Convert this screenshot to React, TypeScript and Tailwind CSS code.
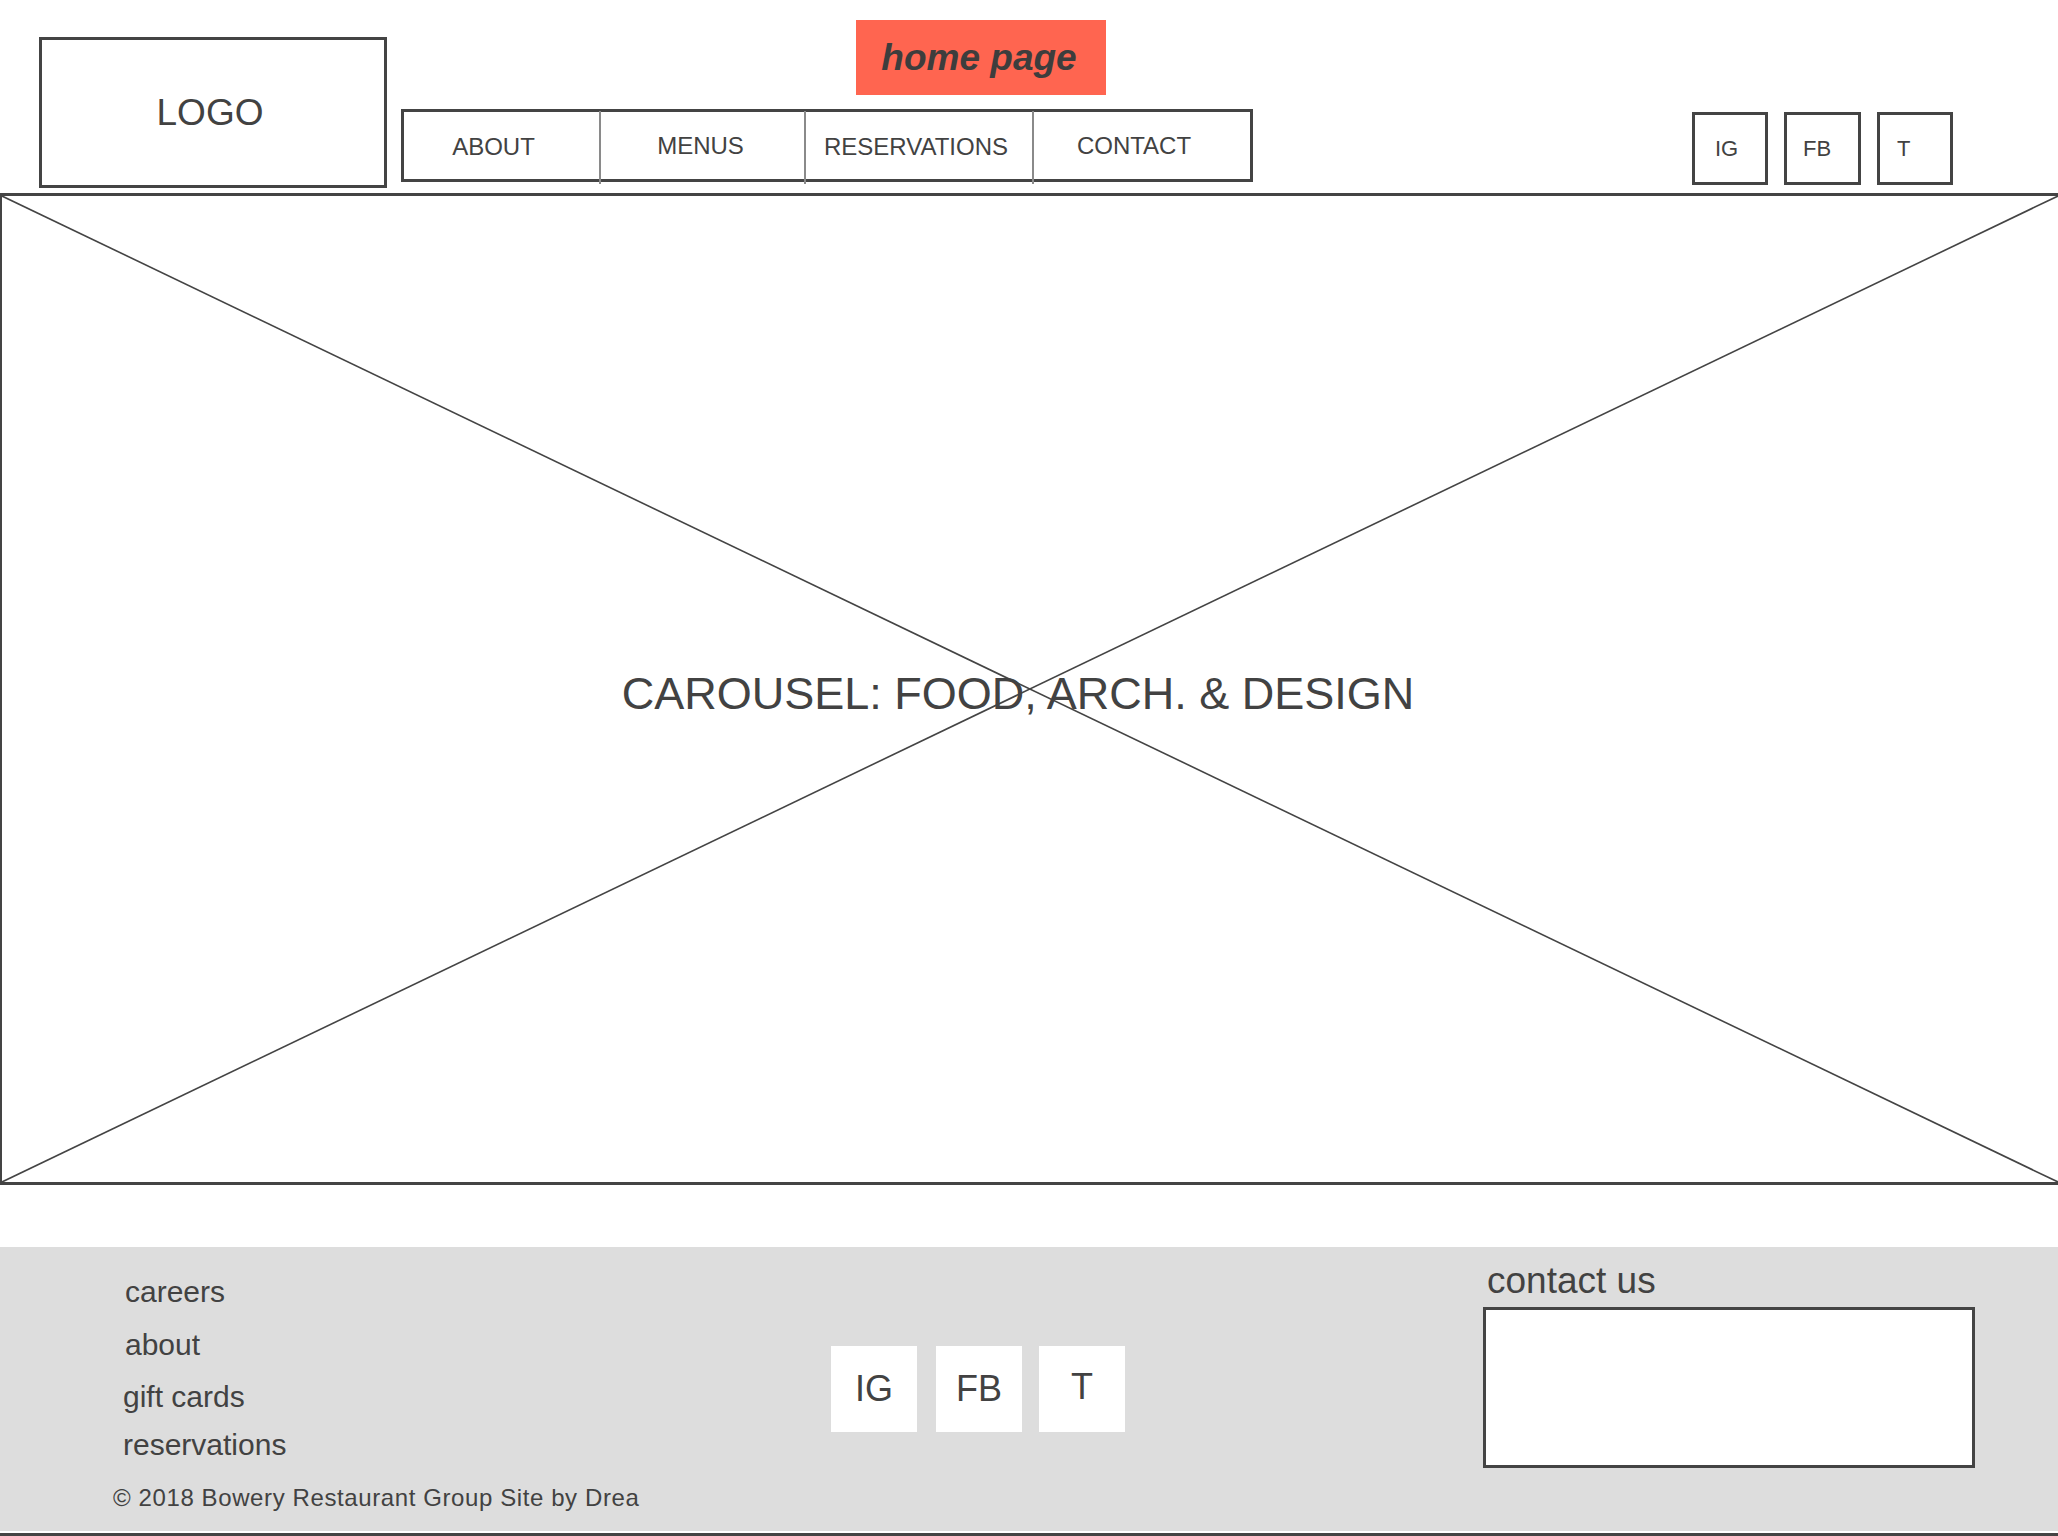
const ink = "text-[#424242]";

function NavCell({ label, w, pr, pt }: { label: string; w: string; pr: string; pt: string }) {
  return (
    <div className={`${w} ${pr} ${pt} flex items-center justify-center text-[24px] ${ink}`}>
      {label}
    </div>
  );
}

function Divider() {
  return <div className="w-[2px] h-[73px] -mt-[1px] bg-[#8a8a8a] self-start" />;
}

export default function App() {
  return (
    <div className="w-[2058px] h-[1536px] bg-white overflow-hidden font-['Liberation_Sans',Arial,sans-serif]">
      {/* header */}
      <div className="h-[193px] flex items-start">
        <div
          className={`ml-[39px] mt-[37px] w-[348px] h-[151px] border-[3px] border-[#444] flex items-center justify-center pr-[6px] text-[37px] ${ink}`}
        >
          LOGO
        </div>

        <div className="ml-[14px] flex flex-col">
          <div className="ml-[455px] mt-[20px] w-[250px] h-[75px] bg-[#ff6550] flex items-center justify-center pr-[4px] text-[37px] font-bold italic text-[#3d3d3d]">
            home page
          </div>
          <div className="mt-[14px] w-[852px] h-[73px] border-[3px] border-[#444] flex">
            <NavCell label="ABOUT" w="w-[195px]" pr="pr-[16px]" pt="pt-[3px]" />
            <Divider />
            <NavCell label="MENUS" w="w-[203px]" pr="pr-[4px]" pt="pt-[0px]" />
            <Divider />
            <NavCell label="RESERVATIONS" w="w-[226px]" pr="pr-[6px]" pt="pt-[3px]" />
            <Divider />
            <NavCell label="CONTACT" w="w-[216px]" pr="pr-[16px]" pt="pt-[0px]" />
          </div>
        </div>

        <div className="ml-auto mr-[105px] mt-[112px] flex gap-[16px]">
          <div className={`w-[76px] h-[73px] border-[3px] border-[#444] flex items-center pl-[20px] text-[22px] ${ink}`}>IG</div>
          <div className={`w-[77px] h-[73px] border-[3px] border-[#444] flex items-center pl-[16px] text-[22px] ${ink}`}>FB</div>
          <div className={`w-[76px] h-[73px] border-[3px] border-[#444] flex items-center pl-[17px] text-[22px] ${ink}`}>T</div>
        </div>
      </div>

      {/* carousel */}
      <div className="relative h-[992px] border-t-[3px] border-b-[3px] border-l-2 border-[#444] flex items-center justify-center">
        <svg className="absolute inset-0 w-full h-full" viewBox="0 0 100 100" preserveAspectRatio="none">
          <line x1="0" y1="0" x2="100" y2="100" stroke="#444" strokeWidth="1.6" vectorEffect="non-scaling-stroke" />
          <line x1="100" y1="0" x2="0" y2="100" stroke="#444" strokeWidth="1.6" vectorEffect="non-scaling-stroke" />
        </svg>
        <div className={`relative pr-[24px] pt-[10px] text-[45px] ${ink}`}>CAROUSEL: FOOD, ARCH. &amp; DESIGN</div>
      </div>

      {/* footer */}
      <div className="mt-[62px] h-[284px] bg-[#dddddd] flex items-start">
        <div className="w-[831px] pl-[113px] pt-[27px] flex flex-col">
          <div className={`ml-[12px] h-[36px] leading-[36px] text-[30px] ${ink}`}>careers</div>
          <div className={`ml-[12px] mt-[17px] h-[36px] leading-[36px] text-[30px] ${ink}`}>about</div>
          <div className={`ml-[10px] mt-[16px] h-[36px] leading-[36px] text-[30px] ${ink}`}>gift cards</div>
          <div className={`ml-[10px] mt-[12px] h-[36px] leading-[36px] text-[30px] ${ink}`}>reservations</div>
          <div className={`mt-[20px] h-[30px] leading-[30px] text-[24px] tracking-[0.6px] ${ink}`}>
            © 2018 Bowery Restaurant Group Site by Drea
          </div>
        </div>

        <div className="mt-[99px] flex">
          <div className={`w-[86px] h-[86px] bg-white flex items-center justify-center text-[36px] ${ink}`}>IG</div>
          <div className={`ml-[19px] w-[86px] h-[86px] bg-white flex items-center justify-center text-[36px] ${ink}`}>FB</div>
          <div className={`ml-[17px] w-[86px] h-[86px] bg-white flex items-center justify-center pb-[4px] text-[36px] ${ink}`}>T</div>
        </div>

        <div className="ml-[358px] mt-[14px] flex flex-col">
          <div className={`ml-[4px] h-[40px] leading-[40px] text-[37px] ${ink}`}>contact us</div>
          <div className="mt-[6px] w-[492px] h-[161px] border-[3px] border-[#444] bg-white" />
        </div>
      </div>
      <div className="mt-[2px] h-[3px] bg-[#444]" />
    </div>
  );
}
